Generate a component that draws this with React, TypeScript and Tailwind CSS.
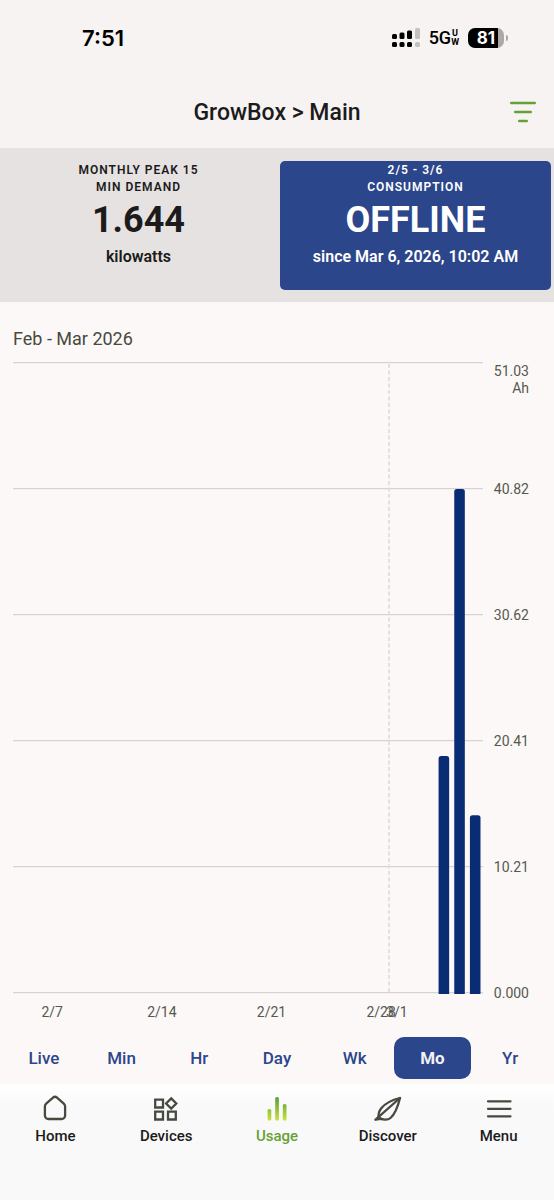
import React, { useState } from 'react';
import clsx from 'clsx';

type NavItem = {
  label: string;
  icon: React.ReactNode;
};

const DAYS = 30;
const MAX_AH = 51.03;

// Day index counts from 2/5
const readings = [
  { day: 27, value: 19.2 },
  { day: 28, value: 40.82 },
  { day: 29, value: 14.4 },
];

const dayLabels: { [key: number]: string } = {
  2: '2/7',
  9: '2/14',
  16: '2/21',
  23: '2/28',
  24: '3/1',
};

const MONTH_START = 24;
const ticks = ['40.82', '30.62', '20.41', '10.21', '0.000'];
const ranges = ['Live', 'Min', 'Hr', 'Day', 'Wk', 'Mo', 'Yr'];

const iconProps = {
  width: 28,
  height: 28,
  viewBox: '0 0 28 28',
  fill: 'none',
  stroke: '#464a40',
  strokeWidth: 2.3,
  'aria-hidden': true,
};

const navItems: NavItem[] = [
  {
    label: 'Home',
    icon: (
      <svg {...iconProps}>
        <path d="M5.2 8.6 12 2.6a3 3 0 0 1 4 0l6.8 6q1.3 1.2 1.3 2.9v9a3.5 3.5 0 0 1-3.5 3.5H7.4A3.5 3.5 0 0 1 3.900 20.500v-9q0-1.700 1.300-2.900z" />
      </svg>
    ),
  },
  {
    label: 'Devices',
    icon: (
      <svg {...iconProps}>
        <path d="M3.2 4.700h7.800v7.800H3.200zM3.200 16.700h7.800v7.800H3.200zM16 16.700h7.800v7.800H16zM19.200 3.400l5.100 5.100-5.100 5.100-5.100-5.100z" />
      </svg>
    ),
  },
  {
    label: 'Usage',
    icon: (
      <svg {...iconProps} stroke="none">
        <defs>
          <linearGradient id="usage" x1="0" y1="2" x2="0" y2="26" gradientUnits="userSpaceOnUse">
            <stop offset="0" stopColor="#5a9e3c" />
            <stop offset="1" stopColor="#cbe23c" />
          </linearGradient>
        </defs>
        <g fill="url(#usage)">
          <rect x="4.6" y="14" width="3.7" height="11.5" rx="1.6" />
          <rect x="12.2" y="2" width="3.7" height="23.5" rx="1.6" />
          <rect x="19.8" y="9" width="3.7" height="16.5" rx="1.6" />
        </g>
      </svg>
    ),
  },
  {
    label: 'Discover',
    icon: (
      <svg {...iconProps} strokeLinecap="round" strokeLinejoin="round">
        <path d="M26 3C19.500 4.600 11.500 8.200 7.500 13 5 16 4.200 19 4.600 22.500 8 25 13.500 25.600 16.500 23 20.500 19.500 23.800 12 26 3z" />
        <path d="M1.500 24.700 26 3M1.500 24.700 7 23.800" />
      </svg>
    ),
  },
  {
    label: 'Menu',
    icon: (
      <svg {...iconProps} strokeLinecap="round">
        <path d="M3 6.300h22.500M3 13.800h22.500M3 21.300h22.500" />
      </svg>
    ),
  },
];

function StatusBar() {
  return (
    <div className="flex h-[76px] items-center justify-between pl-[82px] pr-[46px] text-black">
      <span className="font-[Inter] text-[22px] font-semibold leading-none">7:51</span>
      <div className="flex items-center">
        <svg width="28" height="20" viewBox="0 0 28 20" aria-hidden="true">
          <g>
            <rect x="0" y="6" width="5" height="5" rx="1.5" />
            <rect x="7.5" y="4.5" width="5" height="6.5" rx="1.5" />
            <rect x="15" y="2.5" width="5" height="8.5" rx="1.5" />
            <rect x="0" y="14" width="5" height="5" rx="1.5" />
            <rect x="7.5" y="14" width="5" height="5" rx="1.5" />
            <rect x="15" y="14" width="5" height="5" rx="1.5" />
          </g>
          <g fill="#c4c1c0">
            <rect x="23" y="0" width="5" height="11" rx="1.5" />
            <rect x="23" y="14" width="5" height="5" rx="1.5" />
          </g>
        </svg>
        <span className="ml-[9px] text-lg font-medium leading-none">5G</span>
        <span className="flex flex-col items-center text-[9px] font-bold leading-[9px]">
          <span>U</span>
          <span>W</span>
        </span>
        <div className="ml-[9px] flex items-center gap-[2px]">
          <span className="flex h-5 w-9 items-center justify-center rounded-[7px] bg-linear-to-r from-black from-82% to-[#aba8a7] to-82% font-[Inter] text-[17px] font-bold leading-none text-white">
            81
          </span>
          <span className="h-[6px] w-[2px] rounded-r-full bg-[#aba8a7]" />
        </div>
      </div>
    </div>
  );
}

function Header() {
  return (
    <header className="grid h-[72px] grid-cols-[64px_1fr_64px] items-center">
      <h1 className="col-start-2 pt-[2px] text-center text-[23px] font-medium text-[#1c1b1b]">
        GrowBox &gt; Main
      </h1>
      <button type="button" aria-label="Filter" className="flex justify-center">
        <svg width="28" height="24" viewBox="0 0 28 24" fill="none" stroke="#679f38" strokeWidth="2.4" strokeLinecap="round">
          <path d="M3.200 3h23.600M7.200 12h15.600M11.200 21h7.600" />
        </svg>
      </button>
    </header>
  );
}

interface TileProps {
  title: [string, string];
  value: string;
  note: string;
  active?: boolean;
}

function Tile({ title, value, note, active }: TileProps) {
  return (
    <button
      type="button"
      className={clsx(
        'mx-[3px] flex h-[129px] flex-col items-center rounded-[5px] pt-px text-center',
        active ? 'bg-[#2b468b] text-white' : 'text-[#1c1b1b]'
      )}
    >
      <span className="text-xs font-semibold leading-[17px] tracking-[1px]">
        {title[0]}
        <br />
        {title[1]}
      </span>
      <span className="text-[36px] font-bold leading-[48px]">{value}</span>
      <span className="text-base font-semibold leading-[26px]">{note}</span>
    </button>
  );
}

function UsageChart() {
  return (
    <section className="px-[13px] pt-[25px]">
      <h2 className="text-lg leading-6 text-[#464a40]">Feb - Mar 2026</h2>
      <div className="mt-[11px] flex text-sm text-[#555850]">
        <div className="flex-1">
          <svg className="block h-[632px] w-full" role="img" aria-label="Consumption per day">
            {[0, 1, 2, 3, 4, 5].map((i) => (
              <line key={i} x1="0" x2="100%" y1={0.7 + i * 126} y2={0.7 + i * 126} stroke="#d6d3d2" strokeWidth="1.3" />
            ))}
            <line
              x1={`${(MONTH_START / DAYS) * 100}%`}
              x2={`${(MONTH_START / DAYS) * 100}%`}
              y1="2"
              y2="630"
              stroke="#dddad9"
              strokeWidth="1.6"
              strokeDasharray="4 2.5"
            />
            {/* Bars run past the bottom edge so only the top corners are round */}
            {readings.map(({ day, value }) => {
              const top = 631 - (value / MAX_AH) * 630;
              return (
                <rect
                  key={day}
                  x={`${((day + 0.165) / DAYS) * 100}%`}
                  y={top}
                  width="2.25%"
                  height={640 - top}
                  rx="2.5"
                  fill="#0a2c74"
                />
              );
            })}
          </svg>
          <div className="grid grid-cols-[repeat(30,minmax(0,1fr))] pt-2 leading-5">
            {Array.from({ length: DAYS }, (_, i) => (
              <span key={i} className="flex justify-center whitespace-nowrap">
                {dayLabels[i]}
              </span>
            ))}
          </div>
        </div>
        <div className="w-[58px] pr-3 text-right">
          <div className="h-[118px] pt-px leading-[17px]">
            51.03
            <br />
            Ah
          </div>
          {ticks.map((tick) => (
            <div key={tick} className="h-[126px] leading-[18px] last:h-[18px]">
              {tick}
            </div>
          ))}
        </div>
      </div>
    </section>
  );
}

function App() {
  const [range, setRange] = useState('Mo');
  const [tab, setTab] = useState('Usage');

  return (
    <div className="flex min-h-screen flex-col bg-[#fcf8f7] font-[Roboto,sans-serif]">
      <div className="bg-[#f6f3f2]">
        <StatusBar />
        <Header />
      </div>

      {/* Summary tiles */}
      <div className="grid grid-cols-2 bg-[#e5e2e1] pt-[13px] pb-3">
        <Tile title={['MONTHLY PEAK 15', 'MIN DEMAND']} value="1.644" note="kilowatts" />
        <Tile title={['2/5 - 3/6', 'CONSUMPTION']} value="OFFLINE" note="since Mar 6, 2026, 10:02 AM" active />
      </div>

      <UsageChart />

      {/* Range picker */}
      <div className="mt-[15px] mb-[5px] grid grid-cols-7 px-[5px]">
        {ranges.map((r) => (
          <button
            key={r}
            type="button"
            onClick={() => setRange(r)}
            className={clsx(
              'h-[42px] rounded-[10px] pt-[2px] text-[17px]',
              r === range ? 'bg-[#2b468b] font-bold text-[#f3f0f0]' : 'font-medium text-[#2b468b]'
            )}
          >
            {r}
          </button>
        ))}
      </div>

      {/* Bottom navigation */}
      <nav className="grid flex-1 grid-cols-5 bg-linear-to-b from-white to-[#f9f9f9] to-20% pt-[11px]">
        {navItems.map(({ label, icon }) => (
          <a
            key={label}
            href="#"
            onClick={() => setTab(label)}
            className={clsx(
              'flex flex-col items-center text-[15px] font-medium leading-[26px]',
              label === tab ? 'text-[#679f38]' : 'text-[#1c1b1b]'
            )}
          >
            {icon}
            {label}
          </a>
        ))}
      </nav>
    </div>
  );
}

export default App;
